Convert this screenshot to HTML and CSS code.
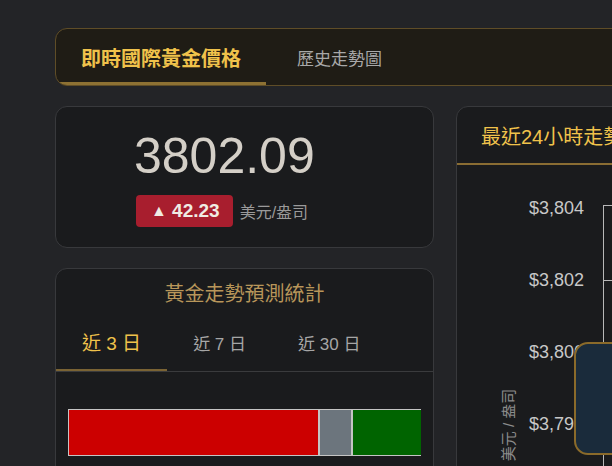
FILE: index.html
```html
<!DOCTYPE html>
<html lang="zh-Hant">
<head>
<meta charset="UTF-8" />
<meta name="viewport" content="width=device-width, initial-scale=1" />
<title>即時國際黃金價格</title>
<link rel="stylesheet" href="styles.css">
</head>
<body>

<div class="page">
  <nav class="main-tabs">
    <div class="main-tab active">即時國際黃金價格</div>
    <div class="main-tab">歷史走勢圖</div>
  </nav>

  <div class="layout">
    <div class="left-col">
      <section class="card price-card">
        <div class="price">3802.09</div>
        <div class="change-row">
          <span class="badge"><span class="arrow">▲</span> 42.23</span>
          <span class="unit">美元/盎司</span>
        </div>
      </section>

      <section class="card stats-card">
        <h2 class="stats-title">黃金走勢預測統計</h2>
        <div class="range-tabs">
          <div class="range-tab active">近 3 日</div>
          <div class="range-tab">近 7 日</div>
          <div class="range-tab">近 30 日</div>
        </div>
        <div class="stats-body">
          <div class="ratio-bar">
            <div class="seg seg-up" style="width: 71.2%"></div>
            <div class="seg seg-flat" style="width: 9.3%"></div>
            <div class="seg seg-down" style="width: 19.5%"></div>
          </div>
        </div>
      </section>
    </div>

    <section class="card chart-card">
      <div class="chart-head">最近24小時走勢圖</div>
      <div class="chart-body">
        <svg class="chart" width="440" height="400" viewBox="0 0 440 400">
          <g class="grid">
            <line x1="146" y1="40" x2="440" y2="40" />
            <line x1="146" y1="115" x2="440" y2="115" />
            <line x1="146" y1="187" x2="440" y2="187" />
            <line x1="146" y1="259" x2="440" y2="259" />
            <line x1="146" y1="40" x2="146" y2="400" />
          </g>
          <g class="ticks">
            <text x="127" y="49">$3,804</text>
            <text x="127" y="121">$3,802</text>
            <text x="127" y="193">$3,800</text>
            <text x="127" y="265">$3,798</text>
          </g>
          <text class="axis-title" transform="translate(57 260) rotate(-90)">美元 / 盎司</text>
        </svg>
        <div class="chart-tip"></div>
      </div>
    </section>
  </div>
</div>

</body>
</html>
```

FILE: styles.css
```css
body {
  background-color: #232427;
  color: #d4cfc7;
  font-family: "Liberation Sans", "Noto Sans CJK TC", sans-serif;
  margin: 0;
  overflow: hidden;
}

.page {
  padding: 28px 0 0 55px;
  width: 900px;
}

/* top tabs */
.main-tabs {
  display: flex;
  height: 56px;
  background: #1f1c15;
  border: 1px solid #5f4d27;
  border-radius: 12px;
  overflow: hidden;
}

.main-tab {
  display: flex;
  align-items: center;
  padding: 0 31px;
  font-size: 17px;
  color: #a8a8a8;
}

.main-tab.active {
  padding: 0 25px;
  font-size: 20px;
  font-weight: bold;
  color: #f0c24b;
  box-shadow: inset 0 -3px 0 #8d7133;
}

.layout {
  display: flex;
  gap: 22px;
  margin-top: 20px;
}

.left-col {
  width: 379px;
  display: flex;
  flex-direction: column;
  gap: 20px;
}

.card {
  background: #1a1b1d;
  border: 1px solid #38393c;
  border-radius: 12px;
  box-sizing: border-box;
}

/* price */
.price-card {
  padding: 21px 0 20px 80px;
}

.price {
  font-size: 50px;
  line-height: 57px;
  color: #d4cfc7;
  text-indent: -2px;
}

.change-row {
  display: flex;
  align-items: center;
  margin-top: 10px;
}

.badge {
  background: #a81e2e;
  color: #f0ebe3;
  font-weight: bold;
  font-size: 19px;
  line-height: 32px;
  height: 32px;
  padding: 0 13px 0 15px;
  border-radius: 4px;
}

.badge .arrow {
  font-size: 16px;
  vertical-align: 1px;
}

.unit {
  margin-left: 7px;
  font-size: 16px;
  color: #9a9a9a;
}

/* stats */
.stats-title {
  margin: 0;
  padding: 11px 0 6px;
  text-align: center;
  font-size: 20px;
  line-height: 28px;
  font-weight: normal;
  color: #b8965a;
}

.range-tabs {
  display: flex;
  border-bottom: 1px solid #3a3b3d;
}

.range-tab {
  height: 57px;
  display: flex;
  align-items: center;
  padding: 0 26px;
  font-size: 17px;
  color: #a6a6a6;
}

.range-tab.active {
  font-size: 19px;
  color: #f0c24b;
  height: 55px;
  border-bottom: 2px solid #7a6334;
  margin-bottom: -1px;
}

.stats-body {
  padding: 37px 12px 40px;
}

.ratio-bar {
  display: flex;
  height: 47px;
}

.seg {
  box-sizing: border-box;
  border: 1.5px solid #c4c4c4;
}

.seg + .seg {
  border-left-width: 1px;
}

.seg-up {
  background: #cc0000;
}

.seg-flat {
  background: #6c757d;
}

.seg-down {
  background: #006400;
  border-right: none;
}

/* chart */
.chart-card {
  width: 440px;
  overflow: hidden;
}

.chart-head {
  height: 56px;
  display: flex;
  align-items: center;
  padding-left: 24px;
  font-size: 20px;
  color: #f0c24b;
  border-bottom: 2px solid #8a6d33;
}

.chart-body {
  position: relative;
  height: 400px;
}

.chart {
  display: block;
}

.grid line {
  stroke: #b8b8b8;
  stroke-width: 1;
  shape-rendering: crispEdges;
}

.ticks text {
  font-family: "Liberation Sans", sans-serif;
  font-size: 18px;
  fill: #c8c8c8;
  text-anchor: end;
}

.axis-title {
  font-family: "Liberation Sans", "Noto Sans CJK TC", sans-serif;
  font-size: 15px;
  fill: #8c8c8c;
  text-anchor: middle;
}

.chart-tip {
  position: absolute;
  left: 117px;
  top: 177px;
  width: 300px;
  height: 113px;
  box-sizing: border-box;
  background: #1a2b3b;
  border: 2px solid #8a6a2a;
  border-radius: 14px;
}
```
